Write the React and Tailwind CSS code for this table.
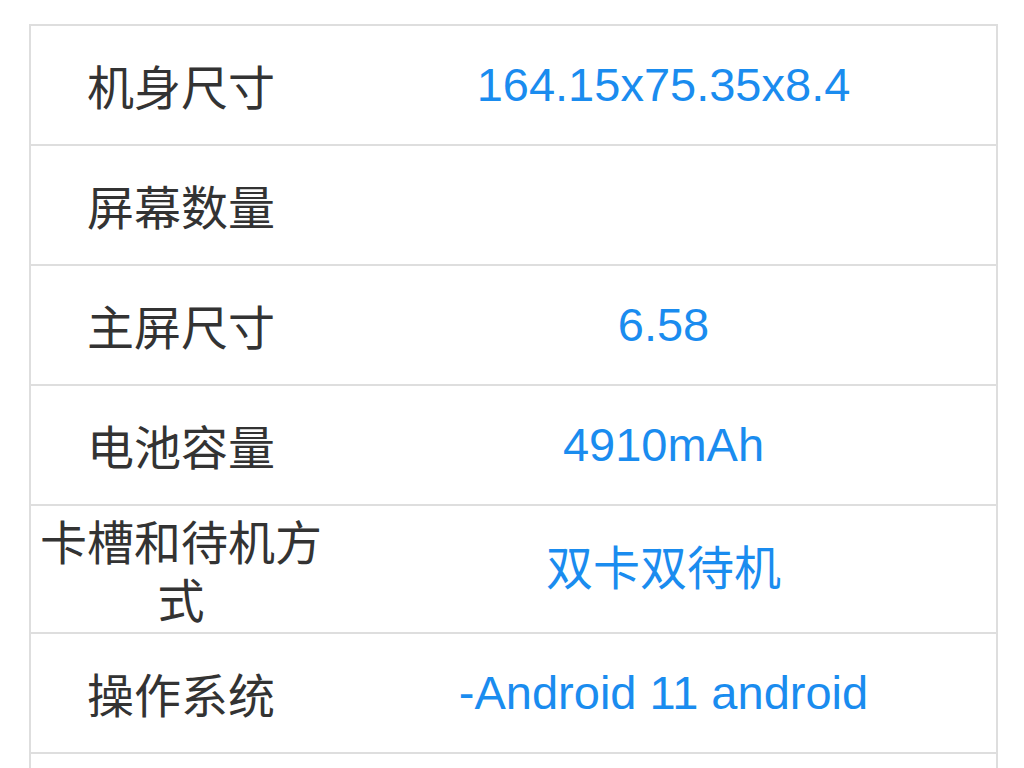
const rows = [
  { label: "机身尺寸", value: "164.15x75.35x8.4" },
  { label: "屏幕数量", value: "" },
  { label: "主屏尺寸", value: "6.58" },
  { label: "电池容量", value: "4910mAh" },
  { label: "卡槽和待机方式", value: "双卡双待机" },
  { label: "操作系统", value: "-Android 11 android" },
  { label: "", value: "" },
];

const App = () => {
  return (
    <div className="min-h-screen bg-white pt-[24px]">
      <div className="ml-[29px] w-[969px] border-2 border-b-0 border-[#dedede]">
        {rows.map((row, i) => (
          <div
            key={i}
            className="flex min-h-[120px] border-b-2 border-[#dedede]"
          >
            <div className="w-[300px] shrink-0 flex items-center justify-center px-[6px] py-[5px] text-center text-[47px] leading-[58px] text-[#333333] font-['Noto_Sans_CJK_SC',sans-serif]">
              {row.label}
            </div>
            <div className="flex-1 flex items-center justify-center text-center text-[47px] leading-[58px] text-[#1a8cef] font-['Liberation_Sans','Noto_Sans_CJK_SC',sans-serif]">
              {row.value}
            </div>
          </div>
        ))}
      </div>
    </div>
  );
};

export default App;
